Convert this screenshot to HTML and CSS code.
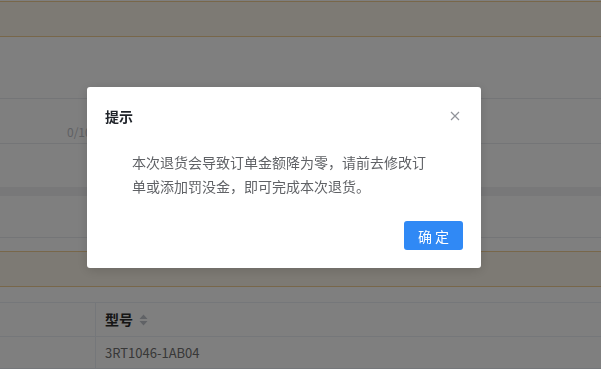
FILE: index.html
```html
<!DOCTYPE html>
<html lang="zh-CN">
<head>
  <meta charset="UTF-8">
  <meta name="viewport" content="width=device-width, initial-scale=1.0">
  <title>提示</title>
  <link rel="stylesheet" href="styles.css">
</head>
<body>

<div class="page">
  <div class="alert-bar"></div>

  <div class="form-row">
    <span class="counter">0/10</span>
  </div>

  <div class="section-head"></div>
  <div class="plain-row"></div>

  <div class="alert-bar alert-bar-low"></div>

  <!-- Goods table -->
  <table class="goods-table">
    <thead>
      <tr>
        <th class="col-first"></th>
        <th>
          型号
          <span class="sort-icon">
            <svg width="9" height="12" viewBox="0 0 9 12"><path d="M4.5 0.5 L8.5 5 H0.5 Z" fill="#c0c4cc"/><path d="M4.5 11.5 L8.5 7 H0.5 Z" fill="#c0c4cc"/></svg>
          </span>
        </th>
      </tr>
    </thead>
    <tbody>
      <tr>
        <td class="col-first"></td>
        <td>3RT1046-1AB04</td>
      </tr>
    </tbody>
  </table>
</div>

<!-- Message box -->
<div class="mask">
  <div class="msg-box">
    <div class="msg-header">
      <span class="msg-title">提示</span>
      <span class="msg-close">
        <svg width="10" height="10" viewBox="0 0 10 10"><path d="M1 1 L9 9 M9 1 L1 9" stroke="#909399" stroke-width="1.2" fill="none"/></svg>
      </span>
    </div>
    <div class="msg-content">
      <p class="msg-text">本次退货会导致订单金额降为零，请前去修改订单或添加罚没金，即可完成本次退货。</p>
    </div>
    <div class="msg-footer">
      <button class="btn-primary">确 定</button>
    </div>
  </div>
</div>

</body>
</html>
```

FILE: styles.css
```css
body {
  margin: 0;
  font-family: "Noto Sans CJK SC", "Liberation Sans", sans-serif;
  font-size: 14px;
  color: #606266;
  background: #ffffff;
  overflow: hidden;
}
.page {
  display: flex;
  flex-direction: column;
  width: 601px;
  height: 369px;
}
.alert-bar {
  margin-top: 1px;
  height: 34px;
  background: #fbf4e8;
  border-top: 1px solid #f0ce94;
  border-bottom: 1px solid #f0ce94;
}
.alert-bar-low {
  margin-top: 13px;
}
.form-row {
  margin-top: 61px;
  height: 44px;
  border-top: 1px solid #e9ebef;
  border-bottom: 1px solid #e9ebef;
  position: relative;
}
.counter {
  position: absolute;
  left: 67px;
  top: 26px;
  font-size: 12px;
  line-height: 14px;
  color: #bfc2c8;
}
.section-head {
  margin-top: 43px;
  height: 10px;
  background: #f0f1f3;
}
.plain-row {
  height: 41px;
  border-bottom: 1px solid #e9ebef;
}
.goods-table {
  margin-top: 15px;
  width: 100%;
  border-collapse: collapse;
  border-top: 1px solid #ebeef5;
}
.goods-table th,
.goods-table td {
  text-align: left;
  padding: 0 10px 0 9px;
  border-bottom: 1px solid #ebeef5;
  border-left: 1px solid #ebeef5;
}
.goods-table th {
  height: 33px;
  font-weight: 700;
  color: #2b2b2b;
}
.goods-table td {
  height: 31px;
  font-size: 13px;
  color: #707070;
}
.goods-table .col-first {
  width: 76px;
  border-left: none;
}
.sort-icon {
  display: inline-block;
  vertical-align: -1px;
  margin-left: 3px;
}
.mask {
  position: fixed;
  inset: 0;
  background: rgba(0, 0, 0, 0.5);
}
.msg-box {
  margin: 87px 0 0 87px;
  width: 394px;
  height: 181px;
  box-sizing: border-box;
  background: #ffffff;
  border-radius: 3px;
  box-shadow: 0 2px 12px rgba(0, 0, 0, 0.15);
  display: flex;
  flex-direction: column;
}
.msg-header {
  display: flex;
  justify-content: space-between;
  align-items: center;
  padding: 19px 21px 0 18px;
  height: 20px;
}
.msg-title {
  font-size: 14px;
  font-weight: 700;
  color: #1f2329;
  line-height: 20px;
}
.msg-close {
  display: flex;
}
.msg-content {
  padding: 24px 0 0 45px;
}
.msg-text {
  margin: 0;
  width: 300px;
  line-height: 24px;
  color: #606266;
}
.msg-footer {
  display: flex;
  justify-content: flex-end;
  padding: 23px 18px 0 0;
}
.btn-primary {
  width: 59px;
  height: 29px;
  padding: 0;
  border: none;
  border-radius: 3px;
  background: #3089f5;
  color: #ffffff;
  font-family: inherit;
  font-size: 14px;
  cursor: pointer;
}
```
